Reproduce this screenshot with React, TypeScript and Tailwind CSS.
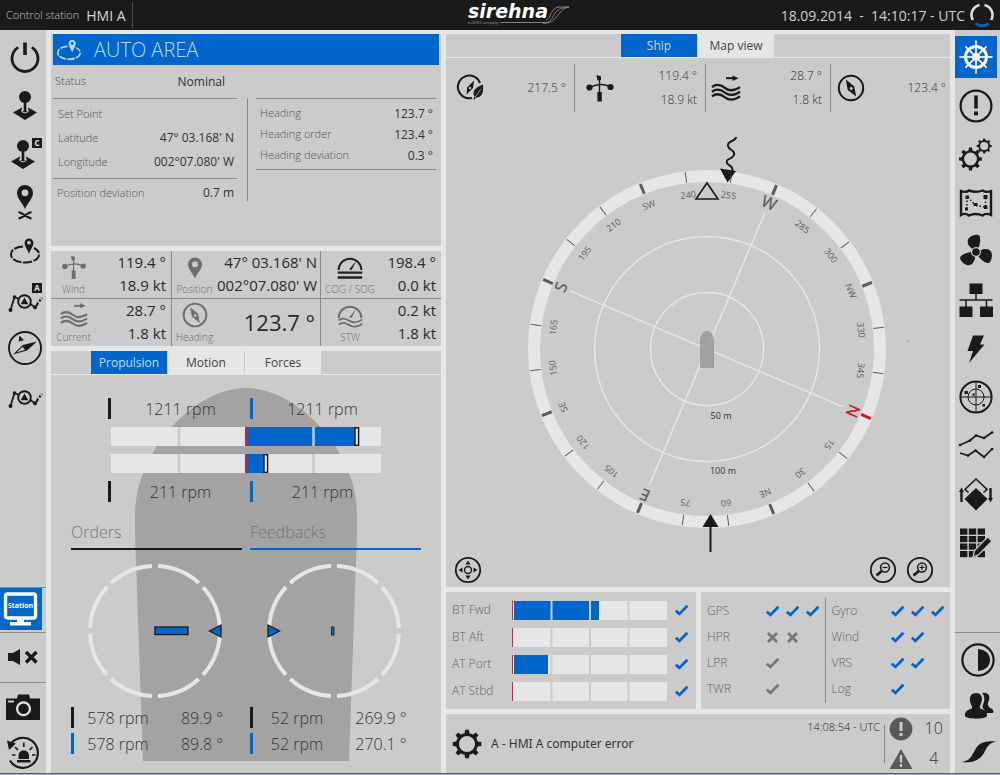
import type { ReactNode } from "react";
import clsx from "clsx";

const BLUE = "#0066cc";
const INK = "#1a1a1a";
const LIGHT = "#e6e6e6";

/* ---------- icons ---------- */

function Icon({
  children,
  className = "size-10",
  box = 40,
}: {
  children: ReactNode;
  className?: string;
  box?: number;
}) {
  return (
    <svg
      viewBox={`0 0 ${box} ${box}`}
      className={clsx("shrink-0", className)}
      fill="none"
      stroke="currentColor"
      strokeWidth="2"
      aria-hidden
    >
      {children}
    </svg>
  );
}

const dot = { fill: "currentColor", stroke: "none" } as const;

function Gear({
  cx,
  cy,
  r,
  teeth = 8,
  w = 2.5,
}: {
  cx: number;
  cy: number;
  r: number;
  teeth?: number;
  w?: number;
}) {
  return (
    <g transform={`translate(${cx} ${cy})`}>
      <circle r={r} strokeWidth={w} />
      {Array.from({ length: teeth }, (_, i) => (
        <path
          key={i}
          {...dot}
          transform={`rotate(${(i * 360) / teeth})`}
          d={`M${-r * 0.27} ${-r} L${-r * 0.2} ${-r * 1.5} H${r * 0.2} L${r * 0.27} ${-r} Z`}
        />
      ))}
    </g>
  );
}

const Power = () => (
  <Icon>
    <path d="M13.2 9.4 A13 13 0 1 0 26.8 9.4" strokeWidth="2.8" />
    <path d="M20 4.5 V17" strokeWidth="3.6" />
  </Icon>
);

const Badge = ({ letter }: { letter: string }) => (
  <g>
    <rect x="27" y="4" width="10" height="10" {...dot} />
    <text
      x="32"
      y="12"
      textAnchor="middle"
      stroke="none"
      fill={LIGHT}
      className="text-[8px] font-bold"
    >
      {letter}
    </text>
  </g>
);

const Joystick = ({ badge }: { badge?: boolean }) => (
  <Icon>
    <g transform={badge ? "translate(-2 1)" : undefined}>
      <circle cx="20" cy="11" r="6" {...dot} />
      <path {...dot} d="M8 26.5 L17 21.5 V25 H23 V21.5 L32 26.5 L20 34 Z" />
      <path d="M20 16 V25" strokeWidth="2.6" />
      <path d="M16.8 23.5 V25.6 Q20 28.4 23.2 25.6 V23.5" stroke="#cbcbcb" strokeWidth="1" />
    </g>
    {badge && <Badge letter="C" />}
  </Icon>
);

const pinPath =
  "M20 27 C18 21.5 12 16.5 12 11 A8 8 0 0 1 28 11 C28 16.5 22 21.5 20 27 Z M20 7.4 A3.4 3.4 0 1 0 20 14.2 A3.4 3.4 0 1 0 20 7.4 Z";

const PinCross = () => (
  <Icon>
    <path {...dot} fillRule="evenodd" d={pinPath} />
    <path d="M13.5 30 C18 31 22 36 26.5 36.5 M26.5 30 C22 31 18 36 13.5 36.5" />
  </Icon>
);

const Pin = ({ className }: { className?: string }) => (
  <Icon className={className} box={32}>
    <path {...dot} fillRule="evenodd" transform="translate(-4 2)" d={pinPath} />
  </Icon>
);

const Area = ({ className }: { className?: string }) => (
  <Icon className={className}>
    <path d="M18 15.5 C10 16 6 19 6 23.5 C6 28 12 31.500 20 31.500 C28 31.500 34 28 34 23.500 C34 20.500 32 18.500 29 17" strokeDasharray="9 1.500" />
    <path
      {...dot}
      fillRule="evenodd"
      d="M24 23 C22.500 18.500 19.600 15.500 19.600 11.800 A4.400 4.400 0 0 1 28.400 11.800 C28.400 15.500 25.500 18.500 24 23 Z M24 9.800 A1.900 1.900 0 1 0 24 13.600 A1.900 1.900 0 1 0 24 9.800 Z"
    />
  </Icon>
);

const Route = ({ badge }: { badge?: boolean }) => (
  <Icon>
    <path d="M5.5 31 L9.5 18 L14 20 M25 25 L30 28 L33 25" strokeWidth="1.8" />
    <path d="M32 25 L37 19" strokeWidth="2.2" strokeDasharray="2 1.6" />
    <circle cx="19.5" cy="22.5" r="6.3" strokeWidth="1.9" />
    <path {...dot} d="M19.5 18.5 L23.3 25.2 H15.7 Z" />
    <circle cx="5.5" cy="31" r="2" {...dot} />
    <circle cx="9.5" cy="18" r="1.8" {...dot} />
    <circle cx="30" cy="28.4" r="1.9" {...dot} />
    {badge && <Badge letter="A" />}
  </Icon>
);

const Compass = () => (
  <Icon>
    <circle cx="20" cy="21" r="16" strokeWidth="1.9" />
    <path {...dot} d="M8 27.5 L17.8 18 L22 23.6 Z M32 14.500 L17.800 18 L22 23.600 Z" />
    <path d="M11.6 25.4 L17.6 19.8 L20 22.8 Z" fill="#cbcbcb" stroke="none" />
    <path {...dot} d="M14.500 8.500 L19 13.200 L13.600 14.400 Z" />
  </Icon>
);

const Heading = ({ className }: { className?: string }) => (
  <Icon className={className} box={32}>
    <circle cx="16" cy="16" r="13" strokeWidth="2.2" />
    <path {...dot} d="M10.5 7 L19.5 14.5 L21.5 25 L12.5 18 Z" />
    <circle cx="16.2" cy="16.5" r="1.5" fill="#cbcbcb" stroke="none" />
  </Icon>
);

const EcoHeading = ({ className }: { className?: string }) => (
  <Icon className={className} box={32}>
    <path d="M25 11 A11.4 11.4 0 1 0 17 26" strokeWidth="2" />
    <path {...dot} d="M19 8.5 L18 16 L11.5 22.5 L12.2 15.5 Z" />
    <circle cx="15" cy="16" r="1.2" fill="#cbcbcb" stroke="none" />
    <path {...dot} d="M28 12.500 C28.500 18 28.500 25.500 21 25.500 L19.200 28 L18.400 27 L19.600 24.500 C16.800 20 19.500 15.500 28 12.500 Z" />
    <path d="M20 25.500 L25.500 17.500" stroke="#cbcbcb" strokeWidth="0.7" />
  </Icon>
);

const WindVane = ({ className }: { className?: string }) => (
  <Icon className={className} box={32}>
    <path d="M6 15.5 C12 12 20 12 26 14.5 M15.5 4 V28" strokeWidth="1.4" />
    <path {...dot} d="M12.5 3 L17 4.5 V8 L13.5 8.5 Z" />
    <circle cx="5.5" cy="15.5" r="3.1" {...dot} />
    <circle cx="26.5" cy="15" r="3.1" {...dot} />
    <rect x="13.4" y="20" width="4.4" height="9.5" {...dot} />
  </Icon>
);

const Current = ({ className }: { className?: string }) => (
  <Icon className={className} box={32}>
    <path d="M16 5.5 H25" strokeWidth="2.2" />
    <path {...dot} d="M23 2.6 L29.5 5.5 L23 8.4 Z" />
    {[15, 20, 25].map((y) => (
      <path
        key={y}
        strokeWidth="2.4"
        d={`M1 ${y} C6 ${y - 4} 10 ${y - 3} 15 ${y + 1} C20 ${y + 5} 25 ${y + 4} 31 ${y}`}
      />
    ))}
  </Icon>
);

const Speed = ({ waves, className }: { waves?: boolean; className?: string }) => (
  <Icon className={className} box={32}>
    <path d="M3 19.500 A13 13 0 1 1 29 19.500" strokeWidth="2.2" />
    <path {...dot} d="M15 18.500 L23.500 8.500 L17.800 19.500 Z" />
    {waves ? (
      <path d="M3 22 C8 18 12 21 16 23 C20 25 25 25 30 21 M3 27 C8 23 12 26 16 28 C20 30 25 30 30 26" strokeWidth="2" />
    ) : (
      <path d="M2 22.500 H30 M2 28 H30" strokeWidth="2.600" />
    )}
  </Icon>
);

const Station = () => (
  <Icon className="size-[42px]" box={42}>
    <rect x="5.5" y="6" width="30" height="24" rx="2" strokeWidth="3.4" />
    <path {...dot} d="M17 31 H24 V34 H31 V37.5 H10 V34 H17 Z" />
    <text x="20.5" y="20" textAnchor="middle" stroke="none" fill="currentColor" className="text-[7px] font-bold">
      Station
    </text>
  </Icon>
);

const Mute = () => (
  <Icon>
    <path {...dot} d="M3 15 H8 L15 11 V27 L8 23 H3 Z" />
    <path d="M21 14 L31.5 24.5 M31.5 14 L21 24.5" strokeWidth="3.4" />
  </Icon>
);

const Camera = () => (
  <Icon>
    <path
      {...dot}
      fillRule="evenodd"
      d="M2 12.5 H13 L14 8.5 H25 L26 12.5 H36 V34 H2 Z M4 14.5 V16.5 H10 V14.5 Z"
    />
    <circle cx="19.500" cy="22.800" r="6.400" stroke={LIGHT} strokeWidth="2.200" />
  </Icon>
);

const Beacon = () => (
  <Icon>
    <path d="M5.5 14 A15 15 0 1 1 6 28.5" strokeWidth="2.2" />
    <path {...dot} d="M3 8.5 L12 11.5 L5 18 Z" />
    <path {...dot} d="M13 28 H26.5 V30.5 H13 Z M14.5 27 V23.5 A5.2 5.2 0 0 1 25 23.5 V27 Z" />
    <path d="M19.8 10.5 V15 M11 15 L14 18 M28.5 15 L25.6 18 M8 23 H11.5 M28 23 H31.5" strokeWidth="1.7" />
  </Icon>
);

const Helm = () => (
  <Icon>
    <circle cx="20" cy="20" r="10.5" strokeWidth="3" />
    <circle cx="20" cy="20" r="4" {...dot} />
    {Array.from({ length: 8 }, (_, i) => (
      <path
        key={i}
        transform={`rotate(${i * 45} 20 20)`}
        d={i % 2 ? "M20 5 V16" : "M20 3.4 V16"}
        strokeWidth="1.7"
      />
    ))}
  </Icon>
);

const Alert = () => (
  <Icon>
    <circle cx="20" cy="20" r="15.4" strokeWidth="2.2" />
    <path d="M20 9.5 V22.5" strokeWidth="3.6" />
    <rect x="18" y="25.5" width="4" height="3.8" {...dot} />
  </Icon>
);

const Gears = () => (
  <Icon>
    <Gear cx={14.5} cy={25} r={7.6} w={2.4} />
    <Gear cx={28.2} cy={12} r={5} w={1.8} />
  </Icon>
);

const MapIcon = () => (
  <Icon>
    <path d="M5 8 Q10 10 13 7.5 Q20 10 26.5 7.5 Q30 10 35 8 V32 Q30 29.5 26.5 32.5 Q20 29.5 13 32.5 Q9 29.5 5 32 Z" strokeWidth="2.4" />
    <path d="M11 14 V27 M12 14 L19 22 M20 22.5 L29 24 M29.5 15 V24" strokeWidth="1.5" strokeDasharray="1.5 2" />
    <path {...dot} d="M9.5 12.5 h3.4 v3.4 h-3.4 z M27.5 12 h4 v4 h-4 z M28 22.5 h3.4 v3.4 h-3.4 z M9 24.5 h3 v3 h-3 z M17.5 20 h4 v3 h-4 z" />
  </Icon>
);

const Propeller = () => (
  <Icon>
    {[0, 120, 240].map((a) => (
      <path
        key={a}
        {...dot}
        transform={`rotate(${a} 20 21)`}
        d="M16.4 17.8 C11 14.5 10.5 9 13.5 6.5 C16.500 4 23 2.500 23.800 5.500 C25 10 23.500 13.500 22.600 16.600 C20 15.400 17.800 16.200 16.400 17.800 Z"
      />
    ))}
    <circle cx="20" cy="21" r="3.8" {...dot} />
  </Icon>
);

const Network = () => (
  <Icon>
    <path {...dot} d="M13.5 3.5 h13 v10.5 h-13 z M3.5 26.5 h13 v10.5 h-13 z M24 26.5 h13 v10.5 h-13 z" />
    <path d="M20 13 V20 M3.5 20 H36.5 M10 20 V27 M30.5 20 V27" strokeWidth="1.5" />
  </Icon>
);

const Bolt = () => (
  <Icon>
    <path {...dot} d="M17 6.5 H28 L24 15.5 H28.5 L13 34 L17 22 H11.5 Z" />
  </Icon>
);

const Radar = () => (
  <Icon>
    <circle cx="20" cy="20" r="15.6" strokeWidth="2" />
    <circle cx="20" cy="20" r="8" strokeWidth="1" />
    <path d="M4 20 H36 M20 4 V36" strokeWidth="1" />
    <path {...dot} d="M8.5 14 h3.4 v3 h-3.4 z M22 8 h3 v3 h-3 z M16.5 16.5 h2.2 v2.2 h-2.2 z M26.5 27 h2.5 v2.5 h-2.5 z" />
  </Icon>
);

const Trends = () => (
  <Icon>
    <path d="M4 19 L14 14.5 L20 9.5 L28 12 L36 6.5 M4 27 L12 29.5 L19.5 24.5 L28 31 L36 23" strokeWidth="1.7" />
    <path d="M4 19 h.1 M14 14.5 h.1 M20 9.5 h.1 M28 12 h.1 M36 6.5 h.1 M12 29.5 h.1 M19.5 24.5 h.1 M28 31 h.1 M36 23 h.1" strokeWidth="2.6" strokeLinecap="round" />
  </Icon>
);

const Layers = () => (
  <Icon>
    <path {...dot} d="M20 14 L31.5 25 L20 36.5 L8.5 25 Z" />
    <path d="M12.5 18.5 L9 15.5 L20 5 L31 15.5 L27.5 18.5" strokeWidth="1.6" />
    <path d="M5.5 28 V17 M34.5 14 V25" strokeWidth="2.4" />
    <path {...dot} d="M3 18 L5.5 13.5 L8 18 Z M32 24 L34.5 28.5 L37 24 Z" />
  </Icon>
);

const GridEdit = () => (
  <Icon>
    {[0, 1, 2, 3].map((r) =>
      [0, 1, 2].map((c) => (
        <rect key={`${r}${c}`} x={4 + c * 8.8} y={5.5 + r * 7.5} width="7.4" height="6.2" {...dot} />
      )),
    )}
    <path d="M17 34 L18.5 27.5 L31.5 14 L36 18 L23 31.5 Z" fill="currentColor" stroke="#cbcbcb" strokeWidth="1.2" />
  </Icon>
);

const Contrast = () => (
  <Icon>
    <circle cx="20" cy="20" r="15.6" strokeWidth="2.2" />
    <path {...dot} d="M20 9 C28.5 9.5 32 15 32 20 C32 25 28.5 30.5 20 31 Z" />
  </Icon>
);

const Users = () => (
  <Icon>
    <path {...dot} d="M24 7 C30 5.5 33 10 30.5 15.5 C29 18 30 20 32 22 C35 23 36 24.5 35 27 H28 C27 24 24 22 24.5 20 C27 15 27 10 24 7 Z" />
    <path {...dot} d="M18 7 C23 7 25 11 23.5 16 C22.5 19 21.5 20 22 22.5 C27 24 29.5 26 29 30 C28 33.5 8 33.5 7 30 C6.5 26 9 24 14 22.5 C14.5 20 13 19 12.2 16 C11 11 13 7 18 7 Z" />
  </Icon>
);

const Swoosh = () => (
  <Icon>
    <path {...dot} d="M4 30 C12 28.5 13 25 17 18 C20 12 25 8 38 9.5 C31 11 29 15 26 21 C22 28 14 31.5 4 30 Z" />
  </Icon>
);

const Check = ({ color = BLUE }: { color?: string }) => (
  <svg viewBox="0 0 15 15" className="size-[15px] shrink-0" fill="none" stroke={color} strokeWidth="2.8" aria-hidden>
    <path d="M1.8 7.7 L5.4 10.9 L13.4 2.7" />
  </svg>
);

const Cross = () => (
  <svg viewBox="0 0 15 15" className="size-[15px] shrink-0" fill="none" stroke="#777" strokeWidth="2.8" aria-hidden>
    <path d="M3 3 L12 12 M12 3 L3 12" />
  </svg>
);

/* ---------- shared bits ---------- */

function Tab({ active, children }: { active?: boolean; children: ReactNode }) {
  return (
    <button
      type="button"
      role="tab"
      aria-selected={!!active}
      className={clsx(
        "h-[23px] w-[76px] text-[12px] leading-[23px] cursor-pointer",
        active ? "bg-[#0066cc] text-[#c0daf5]" : "bg-[#e6e6e6] text-[#444]",
      )}
    >
      {children}
    </button>
  );
}

function NavButton({ label, active, children }: { label: string; active?: boolean; children: ReactNode }) {
  return (
    <button
      type="button"
      aria-label={label}
      className={clsx(
        "flex size-[42px] shrink-0 items-center justify-center cursor-pointer",
        active && "bg-[#0066cc] text-white",
      )}
    >
      {children}
    </button>
  );
}

/* ---------- header ---------- */

function Header() {
  return (
    <header className="grid h-[30px] shrink-0 grid-cols-3 items-center bg-[#1a1a1a] text-[#c4c4c4]">
      <div className="flex h-full items-center pl-[6px]">
        <span className="text-[11px] font-light">Control station</span>
        <span className="ml-[7px] text-[14px] text-[#d8d8d8]">HMI A</span>
        <span className="ml-[6px] h-[26px] w-px bg-[#4a4a4a]" />
      </div>
      <div className="flex justify-center pl-[36px]">
        <svg viewBox="0 0 104 28" className="h-7 w-[104px] overflow-visible" role="img" aria-label="sirehna">
          <text x="2" y="17" fill="#fff" className="font-['DejaVu_Sans'] text-[19px] font-bold italic">
            sirehna
          </text>
          <text x="2" y="23" fill="#999" className="text-[4px] italic">
            a DCNS company
          </text>
          <path d="M34 21.500 H80 C90 20 84 7 103 6 C92 7 92 23 77 22.500 M80 19 C86 17 84 7 93 6 H103" fill="none" stroke="#8a8a8a" strokeWidth="0.900" />
        </svg>
      </div>
      <div className="flex items-center justify-end pr-[6px] text-[14px] text-[#cfcfcf]">
        <span className="whitespace-pre">18.09.2014  -  14:10:17 - UTC</span>
        <svg viewBox="0 0 24 24" className="ml-[5px] size-6" fill="none" strokeWidth="2.6" aria-hidden>
          <path d="M2.8 17 A10.4 10.4 0 0 1 9.5 1.9" stroke="#ddd" />
          <path d="M14.5 1.9 A10.4 10.4 0 0 1 21.2 17" stroke="#ddd" />
          <path d="M5.5 20.6 A10.4 10.4 0 0 0 18.5 20.6" stroke={BLUE} />
        </svg>
      </div>
    </header>
  );
}

/* ---------- side navigation ---------- */

function LeftNav() {
  return (
    <nav className="flex w-[46px] shrink-0 flex-col bg-[#cbcbcb] text-[#1a1a1a]">
      <div className="flex h-[386px] flex-col justify-between pt-[7px] pl-[4px]">
        <NavButton label="Standby"><Power /></NavButton>
        <NavButton label="Joystick"><Joystick /></NavButton>
        <NavButton label="Joystick C"><Joystick badge /></NavButton>
        <NavButton label="Position"><PinCross /></NavButton>
        <NavButton label="Auto area"><Area /></NavButton>
        <NavButton label="Track A"><Route badge /></NavButton>
        <NavButton label="Auto heading"><Compass /></NavButton>
        <NavButton label="Track"><Route /></NavButton>
      </div>
      <div className="mt-auto flex flex-col">
        <div className="border-y border-[#8c8c8c] pb-[2px]">
          <NavButton label="Station" active><Station /></NavButton>
        </div>
        <div className="flex h-[50px] items-center border-b border-[#8c8c8c] pl-[4px]">
          <NavButton label="Mute"><Mute /></NavButton>
        </div>
        <div className="flex flex-col gap-[4px] pt-[2px] pl-[3px]">
          <NavButton label="Screenshot"><Camera /></NavButton>
          <NavButton label="Lamp test"><Beacon /></NavButton>
        </div>
      </div>
    </nav>
  );
}

function RightNav() {
  return (
    <nav className="flex w-[45px] shrink-0 flex-col bg-[#cbcbcb] text-[#1a1a1a]">
      <div className="flex h-[534px] flex-col justify-between pt-[6px]">
        <NavButton label="Ship" active><Helm /></NavButton>
        <NavButton label="Alarms"><Alert /></NavButton>
        <NavButton label="Settings"><Gears /></NavButton>
        <NavButton label="Map"><MapIcon /></NavButton>
        <NavButton label="Thrusters"><Propeller /></NavButton>
        <NavButton label="Network"><Network /></NavButton>
        <NavButton label="Power"><Bolt /></NavButton>
        <NavButton label="Radar"><Radar /></NavButton>
        <NavButton label="Trends"><Trends /></NavButton>
        <NavButton label="Layers"><Layers /></NavButton>
        <NavButton label="Edit grid"><GridEdit /></NavButton>
      </div>
      <div className="mt-auto flex flex-col gap-[4px] border-t border-[#8c8c8c] pt-[6px] pl-[2px]">
        <NavButton label="Contrast"><Contrast /></NavButton>
        <NavButton label="Users"><Users /></NavButton>
        <NavButton label="About"><Swoosh /></NavButton>
      </div>
    </nav>
  );
}

/* ---------- left column ---------- */

function Row({ label, value, className }: { label: string; value?: string; className?: string }) {
  return (
    <div className={clsx("flex items-center justify-between", className)}>
      <span className="text-[11px] font-light text-[#555]">{label}</span>
      {value && <span className="text-[12px] text-[#333]">{value}</span>}
    </div>
  );
}

function ModePanel() {
  return (
    <section className="h-[212px] bg-[#cbcbcb] px-[2px]">
      <h1 className="flex h-[31px] items-center gap-[9px] bg-[#0066cc] text-[20px] font-light text-[#c0daf5]">
        <Area className="size-8" />
        AUTO AREA
      </h1>
      <div className="flex">
        <div className="w-[184px] shrink-0">
          <Row label="Status" value="Nominal" className="h-[34px] border-b border-[#8a8a8a] pr-[12px] pl-[2px]" />
          <div className="h-[80px] border-b border-[#8a8a8a] pt-[3px] pr-[3px] pl-[5px]">
            <Row label="Set Point" className="h-6" />
            <Row label="Latitude" value="47° 03.168' N" className="h-6" />
            <Row label="Longitude" value="002°07.080' W" className="h-6" />
          </div>
          <Row label="Position deviation" value="0.7 m" className="h-[28px] pr-[3px] pl-[4px]" />
        </div>
        <div className="mt-[33px] ml-[10px] h-[103px] w-px bg-[#8a8a8a]" />
        <div className="mt-[33px] mr-[3px] ml-[8px] h-[72px] flex-1 border-y border-[#8a8a8a] pt-[4px] pr-[3px] pl-[4px]">
          <Row label="Heading" value="123.7 °" className="h-[21px]" />
          <Row label="Heading order" value="123.4 °" className="h-[21px]" />
          <Row label="Heading deviation" value="0.3 °" className="h-[21px]" />
        </div>
      </div>
    </section>
  );
}

function Cell({
  icon,
  label,
  values,
  className,
  wide,
}: {
  icon: ReactNode;
  label: string;
  values: string[];
  className?: string;
  wide?: boolean;
}) {
  return (
    <div className={clsx("flex border-[#8a8a8a] pr-[5px] text-[#6e6e6e]", className)}>
      <div className={clsx("flex shrink-0 flex-col items-center pt-[2px]", wide ? "w-[58px]" : "w-[45px]")}>
        {icon}
        <span className="mt-[1px] text-[10px] leading-[14px] font-light whitespace-nowrap">{label}</span>
      </div>
      <div className="flex flex-1 flex-col items-end justify-center whitespace-nowrap text-[#2a2a2a]">
        {values.length > 1 ? (
          values.map((v) => (
            <span key={v} className="text-[15px] leading-[23px]">{v}</span>
          ))
        ) : (
          <span className="text-[22px] leading-[26px]">{values[0]}</span>
        )}
      </div>
    </div>
  );
}

function ReadingsPanel() {
  const size = "size-7";
  return (
    <section className="grid h-[95px] grid-cols-[121px_149px_1fr] grid-rows-2 bg-[#cbcbcb]">
      <Cell className="border-r border-b" icon={<WindVane className={size} />} label="Wind" values={["119.4 °", "18.9 kt"]} />
      <Cell className="border-r border-b" icon={<Pin className={size} />} label="Position" values={["47° 03.168' N", "002°07.080' W"]} />
      <Cell
        className="border-b"
        wide
        icon={<span className="text-[#222]"><Speed className={size} /></span>}
        label="COG / SOG"
        values={["198.4 °", "0.0 kt"]}
      />
      <Cell className="border-r" icon={<Current className={size} />} label="Current" values={["28.7 °", "1.8 kt"]} />
      <Cell className="border-r" icon={<Heading className={size} />} label="Heading" values={["123.7 °"]} />
      <Cell wide icon={<Speed waves className={size} />} label="STW" values={["0.2 kt", "1.8 kt"]} />
    </section>
  );
}

function Hull() {
  return (
    <svg viewBox="0 0 222 373" className="absolute top-[13px] left-[84px] h-[373px] w-[222px]" aria-hidden>
      <path
        d="M0 127 C0 62 60 0 111 0 C162 0 222 62 222 127 V145 L214 373 H8 L0 145 Z"
        fill="#a3a3a3"
      />
    </svg>
  );
}

function RpmRow({ value }: { value: string }) {
  return (
    <div className="ml-[57px] flex">
      {["bg-[#1a1a1a]", "bg-[#0066cc]"].map((c) => (
        <div key={c} className="flex h-[21px] w-[142px] items-center">
          <span className={clsx("h-full w-[3px]", c)} />
          <span className="flex-1 text-center text-[16px] font-light text-[#333]">{value}</span>
        </div>
      ))}
    </div>
  );
}

// Zero is in the middle, value is the filled width to the right of it.
function CenterBar({ value, marker }: { value: number; marker: number }) {
  return (
    <svg viewBox="0 0 270 19" className="ml-[60px] h-[19px] w-[270px]" aria-hidden>
      <rect width="270" height="19" fill={LIGHT} />
      <rect x="136" width={value} height="19" fill={BLUE} />
      <path d="M68 0 V19 M202.5 0 V19" stroke="#cbcbcb" strokeWidth="2.5" />
      <path d="M135 0 V19" stroke="#d8213a" strokeWidth="2" />
      <rect x={marker} y="0.7" width="3.6" height="17.6" fill={LIGHT} stroke={INK} strokeWidth="1.4" />
    </svg>
  );
}

function Dial({ children }: { children: ReactNode }) {
  return (
    <svg viewBox="-70 -70 140 140" className="size-[140px]" aria-hidden>
      {Array.from({ length: 8 }, (_, i) => (
        <path
          key={i}
          transform={`rotate(${i * 45})`}
          d="M3 -64.9 A65 65 0 0 1 43.8 -48"
          fill="none"
          stroke={LIGHT}
          strokeWidth="4"
        />
      ))}
      <g fill={BLUE} stroke={INK} strokeWidth="1.3">{children}</g>
    </svg>
  );
}

function Azimuth({
  title,
  accent,
  rows,
  children,
}: {
  title: string;
  accent: string;
  rows: [string, string][];
  children: ReactNode;
}) {
  const bars = ["bg-[#1a1a1a]", "bg-[#0066cc]"];
  return (
    <div className="w-[171px]">
      <h2 className={clsx("h-[30px] border-b-2 text-[16px] leading-[24px] font-light text-[#777]", accent)}>{title}</h2>
      <div className="mt-[11px] ml-[14px]">{children}</div>
      <div className="mt-[6px] flex flex-col gap-[5px]">
        {rows.map(([rpm, angle], i) => (
          <div key={angle} className="flex h-[21px] items-center text-[16px] font-light text-[#333]">
            <span className={clsx("h-full w-[3px]", bars[i])} />
            <span className="flex-1 text-center">{rpm}</span>
            <span className="w-[80px] text-center">{angle}</span>
          </div>
        ))}
      </div>
    </div>
  );
}

function PropulsionPanel() {
  return (
    <section className="flex flex-1 flex-col bg-[#cbcbcb]">
      <div role="tablist" className="flex gap-px border-b border-[#e6e6e6] pl-[40px]">
        <Tab active>Propulsion</Tab>
        <Tab>Motion</Tab>
        <Tab>Forces</Tab>
      </div>
      <div className="relative flex-1 pb-[17px]">
        <Hull />
        <div className="relative flex flex-col gap-[8px] pt-[23px]">
          <RpmRow value="1211 rpm" />
          <CenterBar value={108} marker={244} />
          <CenterBar value={17} marker={153} />
          <RpmRow value="211 rpm" />
        </div>
        <div className="relative mt-[18px] ml-[20px] flex gap-[8px]">
          <Azimuth title="Orders" accent="border-[#1a1a1a]" rows={[["578 rpm", "89.9 °"], ["578 rpm", "89.8 °"]]}>
            <Dial>
              <rect x="0" y="-4" width="33" height="7.6" />
              <path d="M54.5 0 L66 -6 V6 Z" />
            </Dial>
          </Azimuth>
          <Azimuth title="Feedbacks" accent="border-[#0066cc]" rows={[["52 rpm", "269.9 °"], ["52 rpm", "270.1 °"]]}>
            <Dial>
              <rect x="-2.5" y="-4" width="2.5" height="8" strokeWidth="0.8" />
              <path d="M-66 -6 L-54.5 0 L-66 6 Z" />
            </Dial>
          </Azimuth>
        </div>
      </div>
    </section>
  );
}

/* ---------- ship view ---------- */

const CARDINALS: Record<number, string> = {
  0: "N", 45: "NE", 90: "E", 135: "SE", 180: "S", 225: "SW", 270: "W", 315: "NW",
};

function CompassRose() {
  const offset = 113;
  return (
    <svg viewBox="-261 -237 504 475" className="h-[475px] w-full" role="img" aria-label="Ship compass">
      <circle r="173" fill="none" stroke={LIGHT} strokeWidth="12" />
      <g fill="none" stroke={LIGHT} strokeWidth="1.5">
        <circle r="112.5" />
        <circle r="56.5" />
        <path transform={`rotate(${offset})`} d="M0 -148 V148 M-148 0 H148" />
      </g>
      <path d="M-7 19 V-9 Q-6 -17 0 -18.5 Q6 -17 7 -9 V19 Z" fill="#999" fillOpacity="0.85" />
      {Array.from({ length: 24 }, (_, i) => {
        const deg = i * 15;
        const name = CARDINALS[deg];
        const main = deg % 90 === 0;
        const color = deg === 0 ? "#c8151b" : "#5c5c5c";
        return (
          <g key={deg} transform={`rotate(${deg + offset})`}>
            <path d="M0 -167.5 V-178" stroke={color} strokeWidth={name ? 3 : 1} />
            <text
              y={main ? -153 : -152}
              textAnchor="middle"
              fill={color}
              stroke={color}
              strokeWidth={main ? 0.3 : 0}
              className={main ? "text-[16px]" : "text-[9px]"}
            >
              {name ?? deg}
            </text>
          </g>
        );
      })}
      <text x="14" y="70" textAnchor="middle" fill="#333" className="text-[9px]">50 m</text>
      <text x="16" y="125" textAnchor="middle" fill="#333" className="text-[9px]">100 m</text>
      <path d="M0 -166 L11 -150 H-11 Z" fill="none" stroke={INK} strokeWidth="1.6" />
      <path
        d="M29 -212 C29 -207 20 -209 21 -203 C22 -198 29 -199 27 -194 C25 -189 18 -191 20 -186 C22 -182 27 -184 25 -176"
        fill="none"
        stroke={INK}
        strokeWidth="2"
      />
      <path d="M13 -180.5 L29 -178 L20.5 -166.5 Z" fill={INK} />
      <path d="M3.5 165 L11.5 178 H-4.5 Z" fill={INK} />
      <path d="M3.5 176 V203" stroke={INK} strokeWidth="2" />
      <circle cx="201" cy="-8" r="0.8" fill="#888" />
    </svg>
  );
}

function TopReading({
  icon,
  values,
  className = "pr-[8px] pl-[9px]",
}: {
  icon: ReactNode;
  values: string[];
  className?: string;
}) {
  return (
    <div className={clsx("flex h-[48px] items-center justify-between text-[#1a1a1a]", className)}>
      {icon}
      <div className="flex flex-col items-end text-[12px] leading-[24px] font-light text-[#333]">
        {values.map((v) => <span key={v}>{v}</span>)}
      </div>
    </div>
  );
}

function RoundButton({ label, children }: { label: string; children: ReactNode }) {
  return (
    <button type="button" aria-label={label} className="block size-7 cursor-pointer text-[#1a1a1a]">
      <Icon className="size-7" box={28}>
        <circle cx="14" cy="14" r="12.2" strokeWidth="1.8" />
        {children}
      </Icon>
    </button>
  );
}

const Lens = ({ plus }: { plus?: boolean }) => (
  <g>
    <circle cx="16" cy="11.5" r="4.4" strokeWidth="1.5" />
    <path d="M12.8 15 L7.5 19.5" strokeWidth="2.8" />
    <path d={plus ? "M13.5 11.5 H18.5 M16 9 V14" : "M13.5 11.5 H18.5"} strokeWidth="1.2" />
  </g>
);

function ShipPanel() {
  return (
    <section className="flex flex-1 flex-col bg-[#cbcbcb]">
      <div role="tablist" className="flex gap-px border-b border-[#e6e6e6] pl-[175px]">
        <Tab active>Ship</Tab>
        <Tab>Map view</Tab>
      </div>
      <div className="mt-[6px] grid h-[48px] grid-cols-[129px_131px_125px_1fr] divide-x divide-[#8a8a8a]">
        <TopReading icon={<EcoHeading className="size-8" />} values={["217.5 °"]} />
        <TopReading icon={<WindVane className="size-8" />} values={["119.4 °", "18.9 kt"]} />
        <TopReading className="pr-[8px] pl-[5px]" icon={<Current className="size-[30px]" />} values={["28.7 °", "1.8 kt"]} />
        <TopReading className="pr-[4px] pl-[5px]" icon={<Heading className="size-[30px]" />} values={["123.4 °"]} />
      </div>
      <div className="relative flex-1">
        <CompassRose />
        <div className="absolute bottom-[3px] left-[8px]">
          <RoundButton label="Recenter">
            <circle cx="14" cy="14" r="3.5" strokeWidth="1.4" />
            <path {...dot} d="M14 4.5 L16.5 8.5 H11.5 Z M14 23.5 L16.5 19.5 H11.5 Z M4.5 14 L8.5 11.5 V16.5 Z M23.5 14 L19.5 11.5 V16.5 Z" />
          </RoundButton>
        </div>
        <div className="absolute right-[16px] bottom-[3px] flex gap-[9px]">
          <RoundButton label="Zoom out"><Lens /></RoundButton>
          <RoundButton label="Zoom in"><Lens plus /></RoundButton>
        </div>
      </div>
    </section>
  );
}

/* ---------- bottom panels ---------- */

const THRUSTERS = [
  { name: "BT Fwd", load: 85 },
  { name: "BT Aft", load: 0 },
  { name: "AT Port", load: 34 },
  { name: "AT Stbd", load: 0 },
];

function ThrusterPanel() {
  return (
    <section className="flex w-[250px] shrink-0 flex-col gap-[3px] bg-[#cbcbcb] pt-[6px] pl-[6px]">
      {THRUSTERS.map((t) => (
        <div key={t.name} className="flex h-6 items-center">
          <span className="w-[60px] text-[12px] font-light text-[#666]">{t.name}</span>
          <svg viewBox="0 0 155 19" className="h-[19px] w-[155px]" aria-hidden>
            <rect width="155" height="19" fill={LIGHT} />
            <rect x="2" width={t.load} height="19" fill={BLUE} />
            <path d="M39.5 0 V19 M78 0 V19 M116.5 0 V19" stroke="#cbcbcb" strokeWidth="2" />
            <path d="M0.5 0 V19" stroke="#d8213a" strokeWidth="1" />
          </svg>
          <span className="ml-[7px]"><Check /></span>
        </div>
      ))}
    </section>
  );
}

const SENSORS = [
  [
    { name: "GPS", marks: ["ok", "ok", "ok"] },
    { name: "HPR", marks: ["ko", "ko"] },
    { name: "LPR", marks: ["off"] },
    { name: "TWR", marks: ["off"] },
  ],
  [
    { name: "Gyro", marks: ["ok", "ok", "ok"] },
    { name: "Wind", marks: ["ok", "ok"] },
    { name: "VRS", marks: ["ok", "ok"] },
    { name: "Log", marks: ["ok"] },
  ],
];

function SensorPanel() {
  return (
    <section className="grid flex-1 grid-cols-2 divide-x divide-[#8a8a8a] bg-[#cbcbcb] py-[6px]">
      {SENSORS.map((group, g) => (
        <div key={g} className="flex flex-col pl-[6px]">
          {group.map((s) => (
            <div key={s.name} className="flex h-[26px] items-center">
              <span className="w-[58px] text-[12px] font-light text-[#666]">{s.name}</span>
              <span className="flex gap-[5px]">
                {s.marks.map((m, i) =>
                  m === "ko" ? <Cross key={i} /> : <Check key={i} color={m === "ok" ? BLUE : "#777"} />,
                )}
              </span>
            </div>
          ))}
        </div>
      ))}
    </section>
  );
}

function AlarmBar() {
  return (
    <footer className="flex h-[59px] items-center bg-[#cbcbcb] pl-[6px] text-[#1a1a1a]">
      <Icon className="size-[30px]" box={30}>
        <Gear cx={15} cy={15} r={9.5} w={3} />
      </Icon>
      <p className="ml-[9px] flex-1 font-['Noto_Sans'] text-[12px] text-[#333]">A - HMI A computer error</p>
      <time className="self-start pt-[5px] text-[11px] leading-[16px] font-light text-[#222]">14:08:54 - UTC</time>
      <span className="ml-[4px] h-[38px] w-px bg-[#8a8a8a]" />
      <div className="grid w-[65px] grid-cols-2 items-center justify-items-center gap-y-[5px] text-[16px] leading-[25px] font-light text-[#333]">
        <svg viewBox="0 0 24 24" className="size-6" aria-hidden>
          <circle cx="12" cy="12" r="11.4" fill="#595959" />
          <path d="M12 5 V14 M12 16 V19" stroke="#cbcbcb" strokeWidth="3" />
        </svg>
        <span>10</span>
        <svg viewBox="0 0 24 24" className="size-6" aria-hidden>
          <path d="M12 2 L23.5 22 H0.5 Z" fill="#595959" />
          <path d="M12 8 V15.5 M12 17 V20" stroke="#cbcbcb" strokeWidth="2.4" />
        </svg>
        <span>4</span>
      </div>
    </footer>
  );
}

export default function App() {
  return (
    <div className="flex min-h-screen flex-col bg-[#e6e6e6] font-['Open_Sans','Noto_Sans',sans-serif]">
      <Header />
      <div className="flex flex-1 gap-[5px]">
        <LeftNav />
        <main className="flex flex-1 gap-[5px] pt-[4px]">
          <div className="flex w-[390px] shrink-0 flex-col gap-[5px]">
            <ModePanel />
            <ReadingsPanel />
            <PropulsionPanel />
          </div>
          <div className="flex flex-1 flex-col gap-[5px]">
            <ShipPanel />
            <div className="flex h-[117px] gap-[5px]">
              <ThrusterPanel />
              <SensorPanel />
            </div>
            <AlarmBar />
          </div>
        </main>
        <RightNav />
      </div>
      <div className="h-[2px] border-t border-[#525a70] bg-[#a9b4cc]" />
    </div>
  );
}
